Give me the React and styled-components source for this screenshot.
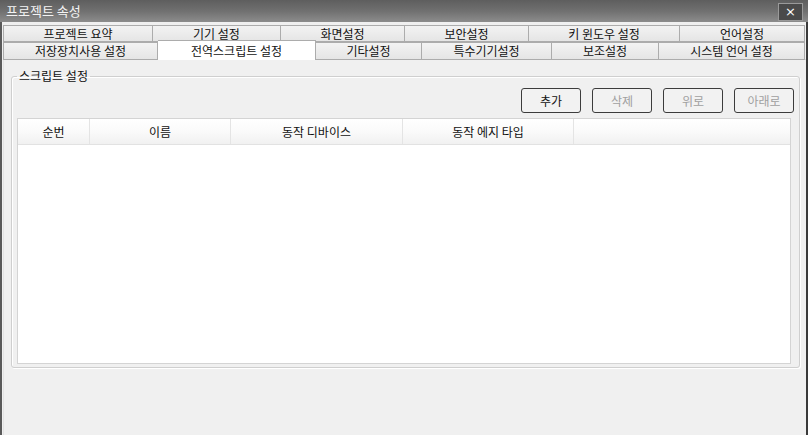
import React from "react";
import styled, { createGlobalStyle } from "styled-components";

const GlobalStyle = createGlobalStyle`
    html, body {
        margin: 0;
        padding: 0;
        background: #ffffff;
    }
    body {
        font-family: "Noto Sans CJK KR", "Noto Sans", sans-serif;
        font-size: 12px;
        color: #000;
    }
`;

const topTabs = [
    { label: "프로젝트 요약", width: 150 },
    { label: "기기 설정", width: 128 },
    { label: "화면설정", width: 124 },
    { label: "보안설정", width: 124 },
    { label: "키 윈도우 설정", width: 151 },
    { label: "언어설정", width: 125 },
];

const bottomTabs = [
    { label: "저장장치사용 설정", width: 155 },
    { label: "전역스크립트 설정", width: 158, active: true },
    { label: "기타설정", width: 106 },
    { label: "특수기기설정", width: 130 },
    { label: "보조설정", width: 107 },
    { label: "시스템 언어 설정", width: 146 },
];

const columns = [
    { label: "순번", width: 72 },
    { label: "이름", width: 141 },
    { label: "동작 디바이스", width: 172 },
    { label: "동작 에지 타입", width: 171 },
    { label: "", width: null },
];

const buttons = [
    { label: "추가", disabled: false },
    { label: "삭제", disabled: true },
    { label: "위로", disabled: true },
    { label: "아래로", disabled: true },
];

const App = () => {
    return (
        <>
            <GlobalStyle />
            <Window>
                <TitleBar>
                    <Title>프로젝트 속성</Title>
                    <CloseButton>×</CloseButton>
                </TitleBar>
                <Body>
                    <TabStrip>
                        <TabRow>
                            {topTabs.map((t) => (
                                <Tab key={t.label} $width={t.width}>{t.label}</Tab>
                            ))}
                        </TabRow>
                        <TabRow>
                            {bottomTabs.map((t) => (
                                <Tab key={t.label} $width={t.width} $active={t.active} $tall>
                                    {t.label}
                                </Tab>
                            ))}
                        </TabRow>
                    </TabStrip>
                    <Panel>
                        <GroupBox>
                            <Legend>스크립트 설정</Legend>
                            <ButtonRow>
                                {buttons.map((b) => (
                                    <ActionButton key={b.label} $disabled={b.disabled}>
                                        {b.label}
                                    </ActionButton>
                                ))}
                            </ButtonRow>
                            <ListView>
                                <HeaderRow>
                                    {columns.map((c, i) => (
                                        <HeaderCell key={i} $width={c.width}>{c.label}</HeaderCell>
                                    ))}
                                </HeaderRow>
                            </ListView>
                        </GroupBox>
                    </Panel>
                </Body>
            </Window>
        </>
    );
};

export default App;

const Window = styled.div`
    width: 808px;
    height: 435px;
    display: flex;
    flex-direction: column;
    overflow: hidden;
`;

const TitleBar = styled.div`
    height: 22px;
    flex: none;
    display: flex;
    align-items: center;
    justify-content: space-between;
    padding: 0 5px 0 6px;
    background: linear-gradient(to bottom, #5e5e5e 0%, #707070 50%, #8c8c8c 100%);
`;

const Title = styled.span`
    color: #f4f4f4;
    font-size: 13px;
    line-height: 16px;
`;

const CloseButton = styled.div`
    width: 23px;
    height: 16px;
    margin-top: 1px;
    display: flex;
    align-items: center;
    justify-content: center;
    background: #4a4a4a;
    border: 1px solid #9a9a9a;
    color: #ffffff;
    font-family: "DejaVu Sans", sans-serif;
    font-size: 13px;
    line-height: 1;
`;

const Body = styled.div`
    flex: 1;
    display: flex;
    flex-direction: column;
    background: #f0f0f0;
    border-left: 2px solid #5a5a5a;
    border-right: 2px solid #3a3a3a;
`;

const TabStrip = styled.div`
    padding: 3px 1px 0 1px;
    display: flex;
    flex-direction: column;
`;

const TabRow = styled.div`
    display: flex;
    align-items: flex-end;
`;

const Tab = styled.div`
    box-sizing: border-box;
    flex: none;
    width: ${(p) => p.$width}px;
    height: ${(p) => (p.$active ? 20 : p.$tall ? 18 : 17)}px;
    margin-top: ${(p) => (p.$active ? -2 : 0)}px;
    display: flex;
    align-items: center;
    justify-content: center;
    font-size: 12px;
    line-height: 14px;
    color: #111;
    background: ${(p) =>
        p.$active ? "#ffffff" : "linear-gradient(to bottom, #f3f3f3, #e5e5e5)"};
    border: 1px solid #acacac;
    border-left: none;
    border-bottom: ${(p) => (p.$active ? "none" : "1px solid #acacac")};
    position: relative;
    z-index: ${(p) => (p.$active ? 2 : 1)};
    &:first-child {
        border-left: 1px solid #acacac;
    }
`;

const Panel = styled.div`
    flex: 1;
    border-top: 1px solid #dadada;
    margin-top: -1px;
    padding: 8px 6px 0 7px;
    background: #f0f0f0;
    margin-left: 1px;
    border-left: 1px solid #e3e3e3;
`;

const GroupBox = styled.fieldset`
    margin: 0;
    padding: 0 8px 3px 5px;
    border: 1px solid #cfcfcf;
    border-radius: 3px;
    box-shadow: inset 1px 1px 0 #ffffff, 1px 1px 0 #ffffff;
    display: flex;
    flex-direction: column;
`;

const Legend = styled.legend`
    padding: 0 2px;
    margin-left: 0;
    font-size: 12px;
    line-height: 16px;
    color: #111;
`;

const ButtonRow = styled.div`
    display: flex;
    justify-content: flex-end;
    gap: 11px;
    margin: 4px -3px 0 0;
`;

const ActionButton = styled.button`
    box-sizing: border-box;
    width: 60px;
    height: 25px;
    padding: 0;
    border: 1px solid #3c3c3c;
    border-radius: 3px;
    background: #f2f2f2;
    font-family: "Noto Sans CJK KR", "Noto Sans", sans-serif;
    font-size: 12px;
    color: ${(p) => (p.$disabled ? "#a0a0a0" : "#111")};
`;

const ListView = styled.div`
    margin-top: 5px;
    height: 246px;
    box-sizing: border-box;
    background: #ffffff;
    border: 1px solid #d4d4d4;
`;

const HeaderRow = styled.div`
    display: flex;
    height: 25px;
    border-bottom: 1px solid #e2e2e2;
    background: linear-gradient(to bottom, #ffffff 0%, #fafafa 50%, #f1f1f1 100%);
`;

const HeaderCell = styled.div`
    box-sizing: border-box;
    ${(p) => (p.$width ? `width: ${p.$width}px; flex: none;` : "flex: 1;")}
    display: flex;
    align-items: center;
    justify-content: center;
    font-size: 12px;
    color: #111;
    border-right: ${(p) => (p.$width ? "1px solid #e4e4e4" : "none")};
`;
